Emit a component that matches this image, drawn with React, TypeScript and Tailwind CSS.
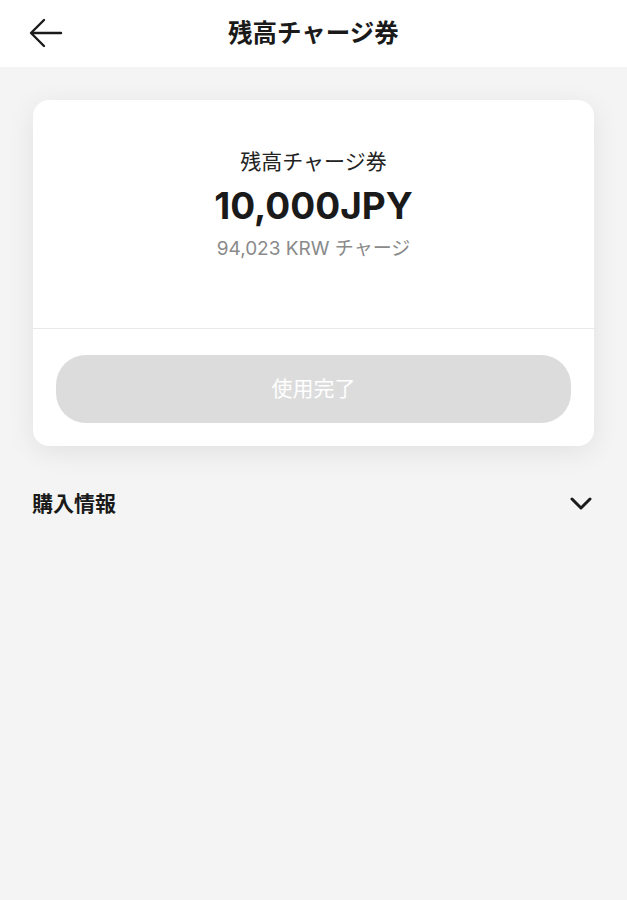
export default function App() {
  const font = {
    fontFamily: '"Noto Sans", "Noto Sans CJK JP", sans-serif',
  };

  return (
    <div className="min-h-[900px] bg-[#f4f4f4]" style={font}>
      <header className="relative flex h-[67px] items-center justify-center bg-white">
        <button className="absolute left-[28px] top-[17px] text-[#1a1a1a]">
          <svg width="36" height="32" viewBox="0 0 36 32" fill="none" stroke="currentColor" strokeWidth="2.4" strokeLinecap="round" strokeLinejoin="round">
            <path d="M33 16H4" />
            <path d="M16 3L3 16l13 13" />
          </svg>
        </button>
        <h1 className="text-[24.5px] font-bold text-[#1a1a1a]">残高チャージ券</h1>
      </header>

      <main className="px-[33px] pt-[33px]">
        <div className="overflow-hidden rounded-[16px] bg-white shadow-[0_6px_28px_rgba(0,0,0,0.08)]">
          <div className="flex h-[228px] flex-col items-center pt-[45px]">
            <p className="text-[21px] leading-[32px] text-[#222]">残高チャージ券</p>
            <p className="mt-[6px] text-[37px] font-bold leading-[46px] text-[#1a1a1a]" style={{ fontFamily: 'Inter, "Noto Sans", sans-serif' }}>
              10,000JPY
            </p>
            <p className="mt-[6px] text-[19px] leading-[28px] text-[#8a8a8a]" style={{ fontFamily: 'Inter, "Noto Sans", "Noto Sans CJK JP", sans-serif' }}>
              94,023 KRW チャージ
            </p>
          </div>
          <div className="h-px bg-[#e8e8e8]" />
          <div className="px-[23px] pb-[23px] pt-[26px]">
            <button className="flex h-[68px] w-full items-center justify-center rounded-[30px] bg-[#dcdcdc] text-[21px] text-white">
              使用完了
            </button>
          </div>
        </div>
      </main>

      <section className="flex items-center justify-between px-[32px] pt-[42px]">
        <h2 className="text-[21px] font-bold text-[#1a1a1a]">購入情報</h2>
        <svg width="24" height="24" viewBox="0 0 24 24" fill="none" stroke="#1a1a1a" strokeWidth="3" strokeLinecap="round" strokeLinejoin="round" className="mr-[2px]">
          <path d="M3 7l9 9 9-9" />
        </svg>
      </section>
    </div>
  );
}
